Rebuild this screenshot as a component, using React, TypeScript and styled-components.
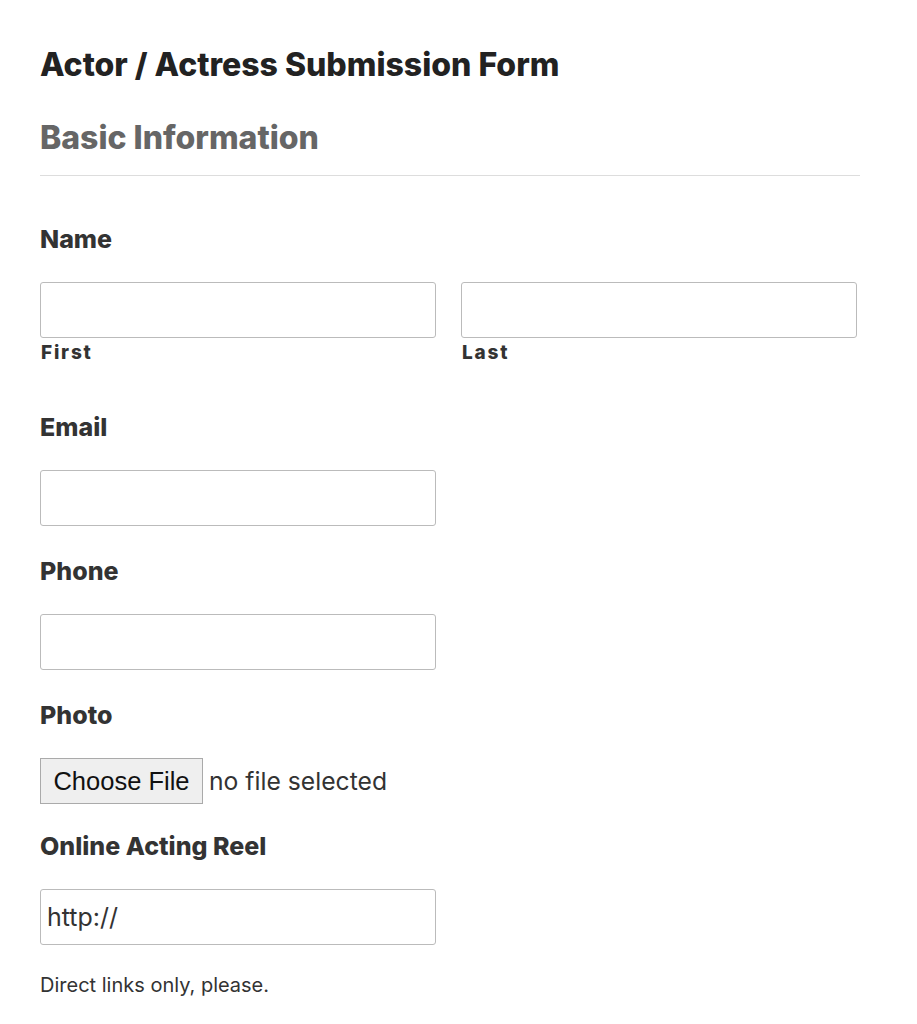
import React from "react";
import styled, { createGlobalStyle } from "styled-components";

const GlobalStyle = createGlobalStyle`
  html, body {
    margin: 0;
    padding: 0;
    background: #fff;
  }
  body {
    font-family: Inter, "Noto Sans", "Liberation Sans", sans-serif;
    color: #333;
  }
`;

const StyledPage = styled.div`
  width: 820px;
  padding: 45px 0 0 40px;
`;

const StyledTitle = styled.h1`
  margin: 0;
  font-size: 32px;
  line-height: 40px;
  font-weight: 800;
  color: #222;
`;

const StyledSectionHeader = styled.div`
  margin-top: 33px;
  padding-bottom: 17px;
  border-bottom: 1px solid #ddd;

  & > h2 {
    margin: 0;
    font-size: 32px;
    line-height: 40px;
    font-weight: 800;
    color: #666;
  }
`;

const StyledField = styled.div<{ $gap: number }>`
  margin-top: ${({ $gap }) => $gap}px;
`;

const StyledLabel = styled.label`
  display: block;
  font-size: 25px;
  line-height: 30px;
  font-weight: 800;
  color: #333;
  margin-bottom: 28px;
`;

const StyledRow = styled.div`
  display: grid;
  grid-template-columns: 396px 396px;
  gap: 25px;
`;

const StyledInput = styled.input`
  display: block;
  box-sizing: border-box;
  width: 396px;
  height: 56px;
  padding: 0 6px;
  border: 1px solid #bbb;
  border-radius: 3px;
  background: #fff;
  font-family: inherit;
  font-size: 25px;
  color: #333;
  outline: none;
`;

const StyledSubLabel = styled.span`
  display: block;
  margin-top: 3px;
  padding-left: 1px;
  font-size: 19px;
  line-height: 24px;
  font-weight: 800;
  letter-spacing: 1.8px;
  color: #333;
`;

const StyledFileRow = styled.div`
  display: flex;
  align-items: center;
  gap: 6px;
`;

const StyledFileButton = styled.button`
  box-sizing: border-box;
  width: 163px;
  height: 46px;
  padding: 0;
  border: 1px solid #aaa;
  background: #efefef;
  font-family: "Liberation Sans", Arial, sans-serif;
  font-size: 25.5px;
  color: #111;
`;

const StyledFileStatus = styled.span`
  font-size: 24.7px;
  color: #333;
`;

const StyledHelp = styled.p`
  margin: 27px 0 0;
  font-size: 20px;
  line-height: 26px;
  color: #333;
`;

export default function App() {
  return (
    <>
      <GlobalStyle />
      <StyledPage>
        <StyledTitle>Actor / Actress Submission Form</StyledTitle>
        <StyledSectionHeader>
          <h2>Basic Information</h2>
        </StyledSectionHeader>

        <StyledField $gap={48}>
          <StyledLabel>Name</StyledLabel>
          <StyledRow>
            <div>
              <StyledInput type="text" />
              <StyledSubLabel>First</StyledSubLabel>
            </div>
            <div>
              <StyledInput type="text" />
              <StyledSubLabel>Last</StyledSubLabel>
            </div>
          </StyledRow>
        </StyledField>

        <StyledField $gap={47}>
          <StyledLabel>Email</StyledLabel>
          <StyledInput type="email" />
        </StyledField>

        <StyledField $gap={30}>
          <StyledLabel>Phone</StyledLabel>
          <StyledInput type="tel" />
        </StyledField>

        <StyledField $gap={30}>
          <StyledLabel>Photo</StyledLabel>
          <StyledFileRow>
            <StyledFileButton type="button">Choose File</StyledFileButton>
            <StyledFileStatus>no file selected</StyledFileStatus>
          </StyledFileRow>
        </StyledField>

        <StyledField $gap={27}>
          <StyledLabel>Online Acting Reel</StyledLabel>
          <StyledInput type="url" defaultValue="http://" />
          <StyledHelp>Direct links only, please.</StyledHelp>
        </StyledField>
      </StyledPage>
    </>
  );
}
